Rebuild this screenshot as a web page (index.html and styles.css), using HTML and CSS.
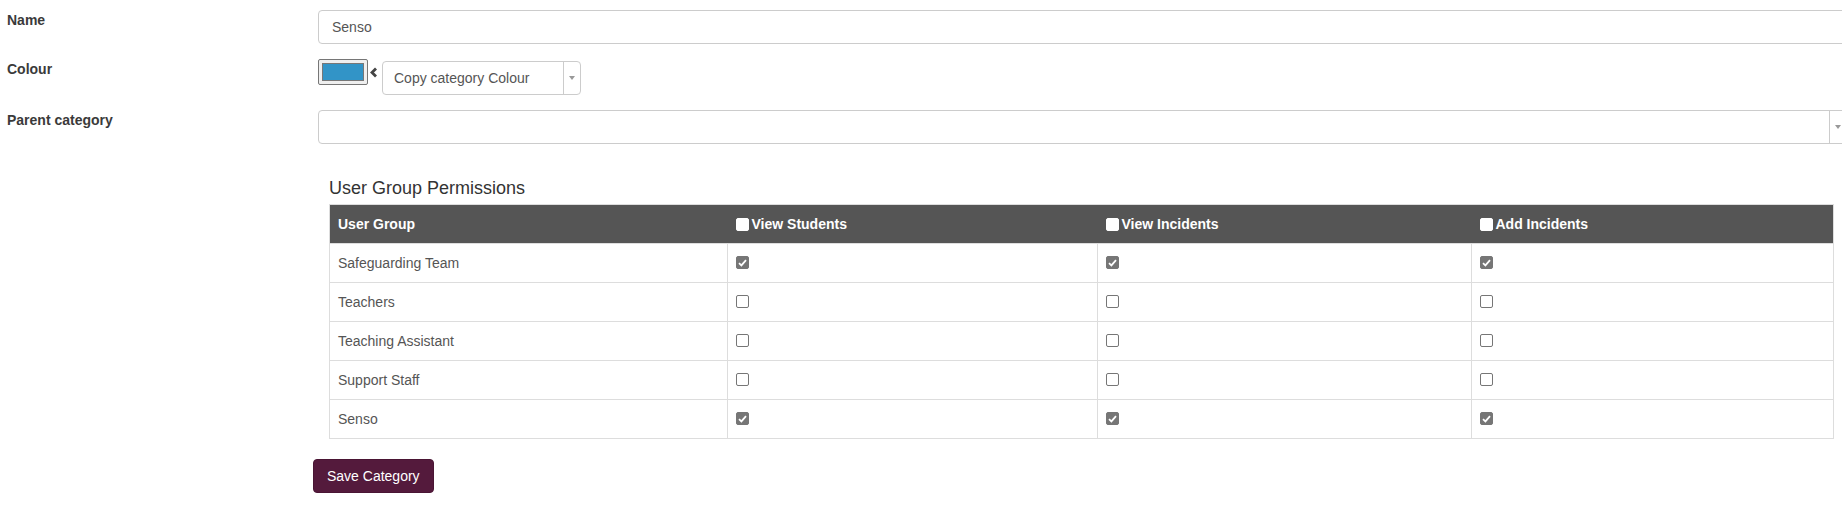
FILE: index.html
```html
<!DOCTYPE html>
<html lang="en">
  <head>
    <meta charset="UTF-8" />
    <meta name="viewport" content="width=device-width, initial-scale=1.0" />
    <title>Edit Category</title>
    <link rel="stylesheet" href="styles.css">
  </head>

  <body>
    <div class="page">
      <div class="form-rows">
        <div class="form-row">
          <label class="form-label" for="nameInput">Name</label>
          <input type="text" id="nameInput" class="text-input" value="Senso" />
        </div>

        <div class="form-row colour-row">
          <label class="form-label">Colour</label>
          <div class="swatch"><span class="swatch-fill"></span></div>
          <svg class="chevron" width="9" height="11" viewBox="0 0 9 11">
            <path d="M7 1.5 L3 5.5 L7 9.5" fill="none" stroke="#444" stroke-width="2.8" />
          </svg>
          <div class="select-box copy-select">
            <span class="select-text">Copy category Colour</span>
            <span class="select-arrow"><span class="caret"></span></span>
          </div>
        </div>

        <div class="form-row">
          <label class="form-label">Parent category</label>
          <div class="select-box parent-select">
            <span class="select-text"></span>
            <span class="select-arrow"><span class="caret"></span></span>
          </div>
        </div>
      </div>

      <div class="perm-block">
        <h4 class="perm-title">User Group Permissions</h4>
        <table class="perm-table">
          <colgroup>
            <col style="width: 398px" />
            <col style="width: 370px" />
            <col style="width: 374px" />
            <col style="width: 362px" />
          </colgroup>
          <thead>
            <tr>
              <th>User Group</th>
              <th><span class="cb cb-head"></span>View Students</th>
              <th><span class="cb cb-head"></span>View Incidents</th>
              <th><span class="cb cb-head"></span>Add Incidents</th>
            </tr>
          </thead>
          <tbody id="permRows"></tbody>
        </table>
      </div>

      <button class="btn-save">Save Category</button>
    </div>

    <script>
      var groups = [
        ["Safeguarding Team", true],
        ["Teachers", false],
        ["Teaching Assistant", false],
        ["Support Staff", false],
        ["Senso", true]
      ];

      var tick =
        '<svg width="9" height="8" viewBox="0 0 9 8"><path d="M1 4.2 L3.4 6.4 L8 1.2" fill="none" stroke="#fff" stroke-width="1.8" /></svg>';

      var body = document.getElementById("permRows");
      groups.forEach(function (g) {
        var html = "<tr><td>" + g[0] + "</td>";
        for (var i = 0; i < 3; i++) {
          html += g[1]
            ? '<td><span class="cb cb-on">' + tick + "</span></td>"
            : '<td><span class="cb"></span></td>';
        }
        body.insertAdjacentHTML("beforeend", html + "</tr>");
      });
    </script>
  </body>
</html>
```

FILE: styles.css
```css
html,
body {
  margin: 0;
  overflow: hidden;
  background: #fff;
}

body {
  font-family: "Liberation Sans", Arial, sans-serif;
  font-size: 14px;
  line-height: 20px;
  color: #333;
}

.page {
  padding: 10px 0 0 7px;
}

.form-rows {
  display: flex;
  flex-direction: column;
  gap: 15px;
}

.form-row {
  display: flex;
  align-items: flex-start;
}

.form-label {
  width: 311px;
  flex-shrink: 0;
  font-weight: bold;
  color: #3a3a3a;
}

.text-input {
  box-sizing: border-box;
  width: 1529px;
  height: 34px;
  flex-shrink: 0;
  padding: 6px 13px;
  border: 1px solid #ccc;
  border-radius: 4px;
  font-family: inherit;
  font-size: 14px;
  color: #555;
  outline: none;
}

/* colour picker */
.swatch {
  box-sizing: border-box;
  width: 50px;
  height: 26px;
  padding: 3px;
  border: 1px solid #767676;
  border-radius: 2px;
  background: #efefef;
}

.swatch-fill {
  display: block;
  box-sizing: border-box;
  height: 100%;
  border: 1px solid #777;
  background: #3294c7;
}

.chevron {
  margin: 8px 0 0 1px;
}

/* select boxes */
.select-box {
  box-sizing: border-box;
  display: flex;
  height: 34px;
  flex-shrink: 0;
  border: 1px solid #ccc;
  border-radius: 4px;
  background: #fff;
  color: #555;
}

.copy-select {
  width: 199px;
  margin: 2px 0 0 4px;
}

.parent-select {
  width: 1529px;
}

.select-text {
  flex: 1;
  padding: 6px 11px;
}

.select-arrow {
  width: 16px;
  border-left: 1px solid #ccc;
  display: flex;
  align-items: center;
  justify-content: center;
}

.caret {
  width: 0;
  height: 0;
  border-left: 3px solid transparent;
  border-right: 3px solid transparent;
  border-top: 4px solid #999;
}

/* permissions */
.perm-block {
  margin: 34px 0 0 322px;
}

.perm-title {
  margin: 0 0 6px;
  font-size: 18px;
  font-weight: normal;
  line-height: 20px;
  color: #333;
}

.perm-table {
  width: 1504px;
  table-layout: fixed;
  border-collapse: collapse;
  border: 1px solid #ddd;
}

.perm-table th {
  padding: 9px 8px;
  background: #555;
  color: #fff;
  text-align: left;
  font-weight: bold;
}

.perm-table td {
  padding: 9px 8px;
  border: 1px solid #ddd;
  color: #555;
}

.cb {
  box-sizing: border-box;
  display: inline-flex;
  align-items: center;
  justify-content: center;
  width: 13px;
  height: 13px;
  margin-top: 3px;
  vertical-align: top;
  border: 1px solid #767676;
  border-radius: 2px;
  background: #fff;
}

.cb svg {
  display: block;
}

.cb-on {
  border-color: #767676;
  background: #767676;
}

.cb-head {
  margin: 4px 3px 0 0;
  border-color: #fff;
}

.btn-save {
  display: block;
  margin: 20px 0 0 306px;
  padding: 6px 13px;
  border: 1px solid #4a1534;
  border-radius: 4px;
  background: #541a3c;
  color: #fff;
  font-family: inherit;
  font-size: 14px;
  line-height: 20px;
}
```
